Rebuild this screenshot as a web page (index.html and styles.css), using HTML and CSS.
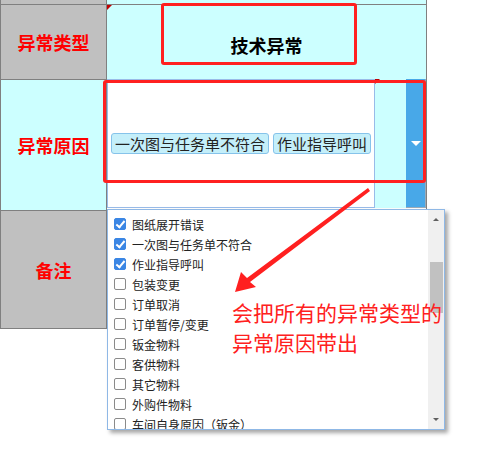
FILE: index.html
```html
<!DOCTYPE html>
<html lang="zh-CN">
<head>
    <meta charset="UTF-8">
    <title>异常登记</title>
    <link rel="stylesheet" href="styles.css">
</head>
<body>
    <div class="page">
        <div class="sheet">
            <div class="cell head"></div>
            <div class="cell fill"></div>

            <div class="cell head label">异常类型</div>
            <div class="cell fill value"><span class="mark"></span>技术异常</div>

            <div class="cell fill label">异常原因</div>
            <div class="cell combo-cell">
                <div class="combo">
                    <div class="combo-input">
                        <span class="tag">一次图与任务单不符合</span>
                        <span class="tag">作业指导呼叫</span>
                    </div>
                    <div class="combo-strip"><span class="mark"></span></div>
                    <div class="combo-btn"><span class="caret"></span></div>
                </div>
            </div>

            <div class="cell head label">备注</div>
            <div class="cell"></div>
        </div>

        <!-- opened list of the combo -->
        <div class="dropdown">
            <ul class="options">
                <li><span class="box checked"></span>图纸展开错误</li>
                <li><span class="box checked"></span>一次图与任务单不符合</li>
                <li><span class="box checked"></span>作业指导呼叫</li>
                <li><span class="box"></span>包装变更</li>
                <li><span class="box"></span>订单取消</li>
                <li><span class="box"></span>订单暂停/变更</li>
                <li><span class="box"></span>钣金物料</li>
                <li><span class="box"></span>客供物料</li>
                <li><span class="box"></span>其它物料</li>
                <li><span class="box"></span>外购件物料</li>
                <li><span class="box"></span>车间自身原因（钣金）</li>
            </ul>
            <div class="scrollbar">
                <span class="arrow-up"></span>
                <span class="thumb"></span>
                <span class="arrow-down"></span>
            </div>
        </div>

        <!-- annotations -->
        <div class="hl hl-type"></div>
        <div class="hl hl-reason"></div>
        <svg class="pointer" width="502" height="468" viewBox="0 0 502 468">
            <polygon points="235,292 241,272 247,278 368,188 370,191 250,282 256,287" fill="#ff2020"/>
        </svg>
        <p class="note">会把所有的异常类型的<br>异常原因带出</p>
    </div>
</body>
</html>
```

FILE: styles.css
```css
body {
    margin: 0;
    background: #fff;
    font-family: "Noto Sans CJK SC", "Noto Sans", sans-serif;
}

.page {
    position: relative;
    width: 502px;
    height: 468px;
    overflow: hidden;
}

.sheet {
    display: grid;
    grid-template-columns: 106px 320px;
    grid-template-rows: 5px 75px 131px 118px;
    border-left: 1px solid #808080;
    width: 426px;
}

.cell {
    position: relative;
    box-sizing: border-box;
    border-right: 1px solid #808080;
    border-bottom: 1px solid #808080;
    background: #fff;
}

.head {
    background: #c0c0c0;
}

.fill {
    background: #ccffff;
}

.label {
    display: flex;
    justify-content: center;
    align-items: center;
    color: #ff0000;
    font-size: 18px;
    font-weight: bold;
}

.value {
    display: flex;
    justify-content: center;
    align-items: center;
    padding-top: 5px;
    font-size: 18px;
    font-weight: bold;
    color: #000;
}

.mark {
    position: absolute;
    top: 0;
    left: 0;
    width: 0;
    height: 0;
    border-top: 5px solid #c00000;
    border-right: 5px solid transparent;
}

.combo-cell {
    border-bottom-color: #a9c6ea;
}

.combo {
    display: flex;
    height: 129px;
    margin-top: -1px;
}

.combo-input {
    flex: 1;
    display: flex;
    align-items: center;
    gap: 4px;
    padding-left: 3px;
    border: 1px solid #99bbe8;
    background: #fff;
}

.tag {
    height: 21px;
    box-sizing: border-box;
    padding: 0 3px;
    border: 1px solid #86c3ea;
    border-radius: 3px;
    background: #c4effa;
    font-size: 15px;
    line-height: 19px;
    color: #222;
}

.combo-strip {
    position: relative;
    width: 31px;
    background: #ccffff;
}

.combo-btn {
    display: flex;
    justify-content: center;
    align-items: center;
    width: 19px;
    background: #48a8e8;
    border-right: 1px solid #9aaab8;
    border-bottom: 1px solid #9aaab8;
}

.caret {
    width: 0;
    height: 0;
    border-left: 5px solid transparent;
    border-right: 5px solid transparent;
    border-top: 5px solid #fff;
}

.dropdown {
    position: absolute;
    left: 107px;
    top: 209px;
    width: 338px;
    height: 221px;
    box-sizing: border-box;
    display: flex;
    border: 1px solid #8fb8e6;
    background: #fff;
    box-shadow: 3px 3px 4px rgba(0, 0, 0, 0.35);
}

.options {
    flex: 1;
    margin: 0;
    padding: 4px 0 0 6px;
    list-style: none;
    overflow: hidden;
}

.options li {
    display: flex;
    align-items: center;
    gap: 6px;
    height: 20px;
    font-size: 12px;
    color: #222;
    white-space: nowrap;
}

.box {
    width: 12px;
    height: 12px;
    box-sizing: border-box;
    border: 1px solid #8a8a8a;
    border-radius: 2px;
    background: #fff;
}

.box.checked {
    position: relative;
    border-color: #3b86e4;
    background: #3b86e4;
}

.box.checked::after {
    content: "";
    position: absolute;
    left: 3px;
    top: 0px;
    width: 3px;
    height: 7px;
    border-right: 2px solid #fff;
    border-bottom: 2px solid #fff;
    transform: rotate(40deg);
}

.scrollbar {
    position: relative;
    width: 16px;
    background: #f0f0f0;
}

.arrow-up,
.arrow-down {
    position: absolute;
    left: 5px;
    width: 0;
    height: 0;
    border-left: 3px solid transparent;
    border-right: 3px solid transparent;
}

.arrow-up {
    top: 8px;
    border-bottom: 3px solid #606060;
}

.arrow-down {
    bottom: 8px;
    border-top: 3px solid #606060;
}

.thumb {
    position: absolute;
    left: 2px;
    right: 1px;
    top: 52px;
    height: 51px;
    background: #c1c1c1;
}

.hl {
    position: absolute;
    box-sizing: border-box;
    border: 3px solid #ff2020;
    border-radius: 3px;
}

.hl-type {
    left: 161px;
    top: 3px;
    width: 196px;
    height: 62px;
}

.hl-reason {
    left: 103px;
    top: 80px;
    width: 323px;
    height: 103px;
}

.pointer {
    position: absolute;
    left: 0;
    top: 0;
    pointer-events: none;
}

.note {
    position: absolute;
    left: 232px;
    top: 297px;
    margin: 0;
    font-size: 21px;
    line-height: 30px;
    color: #ff2020;
    white-space: nowrap;
}
```
